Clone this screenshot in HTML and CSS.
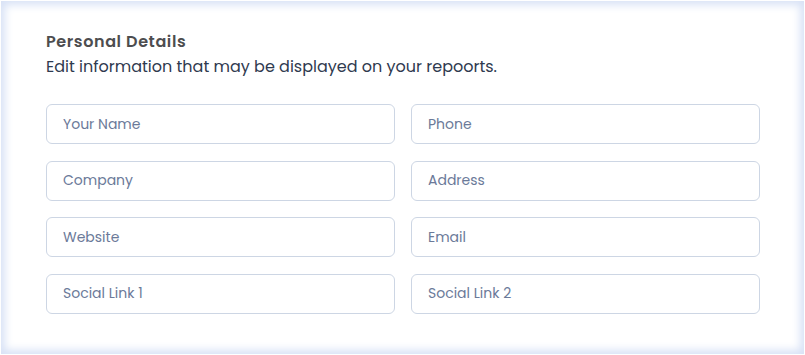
FILE: index.html
```html
<!DOCTYPE html>
<html lang="en">
<head>
<meta charset="utf-8">
<title>Personal Details</title>
<link rel="stylesheet" href="styles.css">
</head>
<body>
<div class="frame">
  <section class="card">
    <h2 class="title">Personal Details</h2>
    <p class="subtitle">Edit information that may be displayed on your repoorts.</p>
    <form class="fields">
      <input class="field" type="text" placeholder="Your Name">
      <input class="field" type="text" placeholder="Phone">
      <input class="field" type="text" placeholder="Company">
      <input class="field" type="text" placeholder="Address">
      <input class="field" type="text" placeholder="Website">
      <input class="field" type="text" placeholder="Email">
      <input class="field" type="text" placeholder="Social Link 1">
      <input class="field" type="text" placeholder="Social Link 2">
    </form>
  </section>
</div>
</body>
</html>
```
FILE: styles.css
```css
* { box-sizing: border-box; }
html, body { margin: 0; padding: 0; background: #ffffff; }
body { font-family: "Poppins", Inter, "Noto Sans", sans-serif; }
.frame {
  margin: 1px 1px 0 1px;
  height: 353px;
  background: #ffffff;
  box-shadow: inset 0 0 9px 4px #d8e2f6;
}
.card {
  padding: 30px 45px 0 45px;
}
.title {
  margin: 0;
  font-size: 16px;
  line-height: 22px;
  font-weight: 600;
  letter-spacing: 0.6px;
  color: #4d4d4f;
}
.subtitle {
  margin: 3px 0 0 0;
  font-size: 16px;
  line-height: 22px;
  color: #2f3a4f;
}
.fields {
  margin-top: 26px;
  display: grid;
  grid-template-columns: 349px 349px;
  column-gap: 16px;
  row-gap: 16.5px;
}
.field {
  height: 40px;
  border: 1px solid #cdd6e4;
  border-radius: 6px;
  padding: 0 16px;
  font-family: inherit;
  font-size: 14px;
  color: #2f3a4f;
  background: #fff;
  outline: none;
}
.field::placeholder { color: #6b7a99; opacity: 1; }
```
